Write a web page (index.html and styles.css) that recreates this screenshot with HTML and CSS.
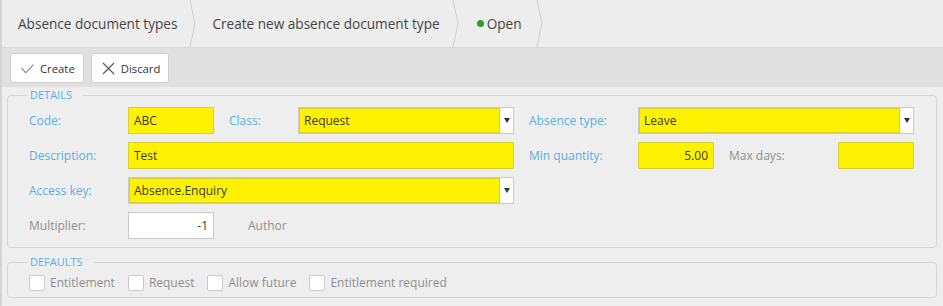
FILE: index.html
```html
<!DOCTYPE html>
<html lang="en">
<head>
    <meta charset="UTF-8">
    <title>Create new absence document type</title>
    <link rel="stylesheet" href="styles.css">
</head>
<body>
    <nav class="crumbs">
        <a href="#" class="crumb">Absence document types</a>
        <svg class="crumb__sep" width="7" height="47" viewBox="0 0 7 47" aria-hidden="true"><path d="M1 0 L6 23.5 L1 47" fill="none" stroke="#cfcfcf" stroke-width="1"/></svg>
        <span class="crumb">Create new absence document type</span>
        <svg class="crumb__sep" width="7" height="47" viewBox="0 0 7 47" aria-hidden="true"><path d="M1 0 L6 23.5 L1 47" fill="none" stroke="#cfcfcf" stroke-width="1"/></svg>
        <span class="crumb crumb--status"><span class="dot"></span>Open</span>
        <svg class="crumb__sep" width="7" height="47" viewBox="0 0 7 47" aria-hidden="true"><path d="M1 0 L6 23.5 L1 47" fill="none" stroke="#cfcfcf" stroke-width="1"/></svg>
    </nav>

    <div class="toolbar">
        <button class="btn">
            <svg width="13" height="13" viewBox="0 0 13 13" aria-hidden="true"><path d="M0.5 6 L4.8 10.8 L12.5 2.5" fill="none" stroke="#5a7896" stroke-width="1.1"/></svg>
            Create
        </button>
        <button class="btn">
            <svg width="13" height="13" viewBox="0 0 13 13" aria-hidden="true"><path d="M1 1 L12 12 M12 1 L1 12" fill="none" stroke="#555" stroke-width="1.1"/></svg>
            Discard
        </button>
    </div>

    <main class="content">
        <fieldset class="group">
            <legend>Details</legend>
            <div class="form-grid">
                <label class="lbl">Code:</label>
                <div class="field field--req">ABC</div>
                <label class="lbl lbl--pad">Class:</label>
                <div class="select"><span class="select__value">Request</span><span class="select__arrow"></span></div>
                <label class="lbl lbl--pad">Absence type:</label>
                <div class="select span-3"><span class="select__value">Leave</span><span class="select__arrow"></span></div>

                <label class="lbl">Description:</label>
                <div class="field field--req span-3">Test</div>
                <label class="lbl lbl--pad">Min quantity:</label>
                <div class="field field--req field--num">5.00</div>
                <label class="lbl lbl--pad lbl--muted">Max days:</label>
                <div class="field field--req"></div>

                <label class="lbl">Access key:</label>
                <div class="select span-3"><span class="select__value">Absence.Enquiry</span><span class="select__arrow"></span></div>
                <div class="span-4"></div>

                <label class="lbl lbl--muted">Multiplier:</label>
                <div class="field field--num">-1</div>
                <label class="lbl lbl--author lbl--muted">Author</label>
            </div>
        </fieldset>

        <fieldset class="group group--defaults">
            <legend>Defaults</legend>
            <div class="checks">
                <label class="check"><span class="check__box"></span>Entitlement</label>
                <label class="check"><span class="check__box"></span>Request</label>
                <label class="check"><span class="check__box"></span>Allow future</label>
                <label class="check"><span class="check__box"></span>Entitlement required</label>
            </div>
        </fieldset>
    </main>
</body>
</html>
```

FILE: styles.css
```css
:root {
    --bg: #eeeeee;
    --toolbar: #e0e0e0;
    --border: #d6d6d6;
    --input-border: #c9c9c9;
    --blue: #56b0e6;
    --muted: #8e8e8e;
    --text: #444444;
    --required: #fff200;
    --required-border: #d7cf35;
    --font: 'Open Sans', 'Noto Sans', sans-serif;
}

* {
    box-sizing: border-box;
}

body {
    margin: 0;
    background: var(--bg);
    font-family: var(--font);
    font-size: 12px;
    color: var(--text);
    border-left: 2px solid #d4d4d4;
    min-height: 100vh;
}

/* Breadcrumbs */
.crumbs {
    display: flex;
    align-items: center;
    height: 47px;
    background: #ededed;
}

.crumb {
    padding: 0 12px 0 16px;
    font-size: 13.6px;
    color: var(--text);
    text-decoration: none;
    white-space: nowrap;
}

.crumb__sep {
    display: block;
    flex: none;
}

.crumb--status {
    display: flex;
    align-items: center;
    padding-left: 18px;
    padding-right: 14px;
}

.dot {
    width: 7px;
    height: 7px;
    border-radius: 50%;
    background: #2f9a34;
    margin-right: 3px;
}

/* Toolbar */
.toolbar {
    display: flex;
    gap: 7px;
    height: 40px;
    padding: 5px 8px 0;
    background: var(--toolbar);
    border-top: 1px solid #dadada;
}

.btn {
    display: inline-flex;
    align-items: center;
    gap: 6px;
    height: 30px;
    padding: 0 8px 0 10px;
    background: #ffffff;
    border: 1px solid #cfcfcf;
    border-radius: 3px;
    font-family: var(--font);
    font-size: 11.3px;
    color: #333;
}

/* Field groups */
.content {
    padding: 1px 6px 0 5px;
}

.group {
    margin: 0 0 7px;
    padding: 5px 0 8px 21px;
    border: 1px solid var(--border);
    border-radius: 4px;
    min-width: 0;
}

.group legend {
    margin-left: -2px;
    padding: 0 11px 0 3px;
    font-size: 11px;
    line-height: 14px;
    color: var(--blue);
    text-transform: uppercase;
}

.form-grid {
    display: grid;
    grid-template-columns: 99px 86px 84px 216px 124px 76px 124px 76px;
    grid-auto-rows: 27px;
    row-gap: 8px;
    align-items: center;
}

.span-3 {
    grid-column: span 3;
}

.span-4 {
    grid-column: span 4;
}

.lbl {
    color: var(--blue);
    white-space: nowrap;
}

.lbl--pad {
    padding-left: 15px;
}

.lbl--author {
    padding-left: 34px;
}

.lbl--muted {
    color: var(--muted);
}

.field {
    height: 27px;
    padding: 0 5px;
    line-height: 25px;
    background: #ffffff;
    border: 1px solid var(--input-border);
    color: #3a3a2a;
}

.field--req {
    background: var(--required);
    border-color: var(--required-border);
}

.field--num {
    text-align: right;
}

.select {
    display: flex;
    height: 27px;
    background: #ffffff;
    border: 1px solid var(--input-border);
}

.select__value {
    flex: 1;
    padding: 0 5px;
    line-height: 25px;
    background: var(--required);
    box-shadow: inset 0 0 0 1px var(--required-border);
    color: #3a3a2a;
}

.select__arrow {
    display: flex;
    align-items: center;
    justify-content: center;
    width: 13px;
}

.select__arrow::before {
    content: "";
    border-top: 5px solid #333;
    border-left: 3.5px solid transparent;
    border-right: 3.5px solid transparent;
}

/* Defaults */
.group--defaults {
    padding: 4px 0 5px 21px;
}

.checks {
    display: flex;
    height: 19px;
    align-items: center;
}

.check {
    display: flex;
    align-items: center;
    margin-right: 13px;
    color: var(--muted);
    white-space: nowrap;
}

.check__box {
    width: 16px;
    height: 16px;
    margin-right: 5px;
    background: #ffffff;
    border: 1px solid #c9c9c9;
    border-radius: 2px;
}
```
